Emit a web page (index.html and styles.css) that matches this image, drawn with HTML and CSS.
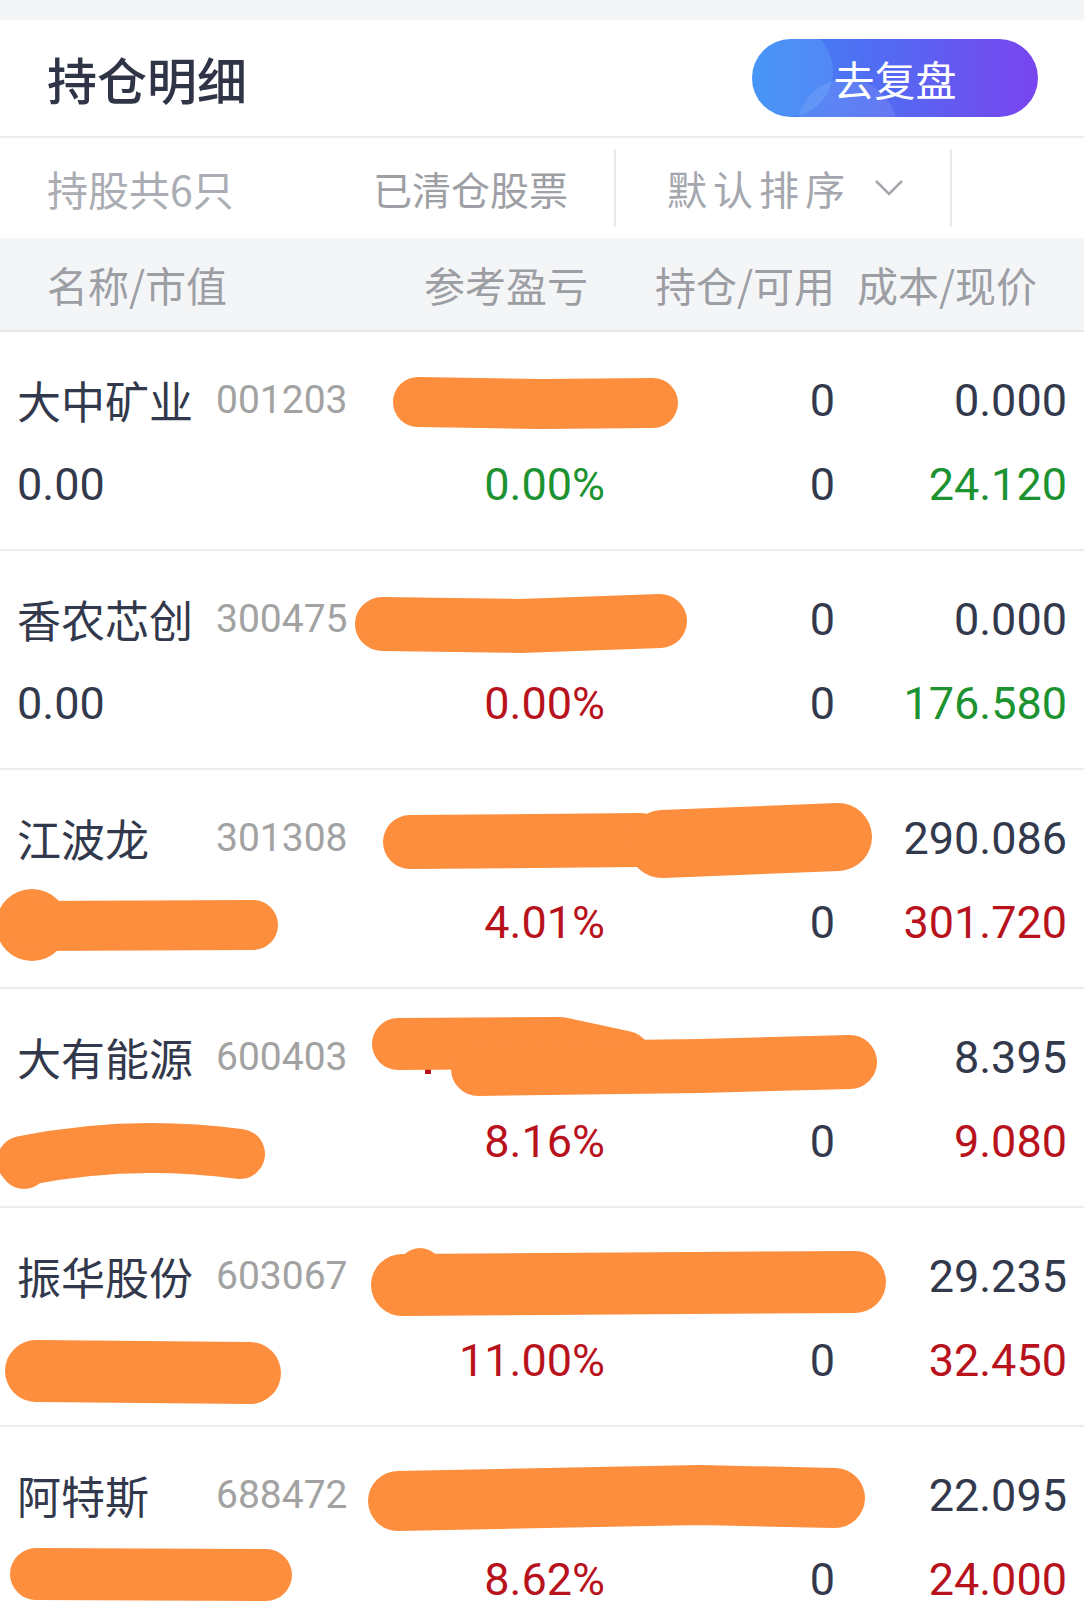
FILE: index.html
```html
<!DOCTYPE html>
<html lang="zh-CN">
<head>
    <meta charset="UTF-8">
    <meta name="viewport" content="width=device-width, initial-scale=1.0">
    <title>持仓明细</title>
    <link rel="stylesheet" href="styles.css">
</head>
<body>

<div class="topbar"></div>

<header class="panel-head">
    <h1 class="panel-title">持仓明细</h1>
    <button class="review-btn"><span>去复盘</span></button>
</header>

<nav class="tabs">
    <div class="tab tab-count">持股共6只</div>
    <div class="tab tab-cleared">已清仓股票</div>
    <div class="tab tab-sort">
        <span>默认排序</span>
        <svg class="chevron" width="30" height="18" viewBox="0 0 30 18">
            <polyline points="2,2 15,15 28,2"></polyline>
        </svg>
    </div>
</nav>

<div class="col-head">
    <span>名称/市值</span>
    <span class="r">参考盈亏</span>
    <span class="r">持仓/可用</span>
    <span class="r">成本/现价</span>
</div>

<ul class="positions">
    <li class="position">
        <div class="line">
            <div class="stock"><span class="stock-name">大中矿业</span><span class="stock-code">001203</span></div>
            <span class="num"></span>
            <span class="num">0</span>
            <span class="num">0.000</span>
        </div>
        <div class="line">
            <div class="stock"><span class="mv">0.00</span></div>
            <span class="num down">0.00%</span>
            <span class="num">0</span>
            <span class="num down">24.120</span>
        </div>
        <svg class="scribble" viewBox="0 0 1084 219">
            <path d="M418 70 L540 72 L653 71" stroke-width="50"></path>
        </svg>
    </li>
    <li class="position">
        <div class="line">
            <div class="stock"><span class="stock-name">香农芯创</span><span class="stock-code">300475</span></div>
            <span class="num"></span>
            <span class="num">0</span>
            <span class="num">0.000</span>
        </div>
        <div class="line">
            <div class="stock"><span class="mv">0.00</span></div>
            <span class="num up">0.00%</span>
            <span class="num">0</span>
            <span class="num down">176.580</span>
        </div>
        <svg class="scribble" viewBox="0 0 1084 219">
            <path d="M382 73 L520 75 L660 70" stroke-width="54"></path>
        </svg>
    </li>
    <li class="position">
        <div class="line">
            <div class="stock"><span class="stock-name">江波龙</span><span class="stock-code">301308</span></div>
            <span class="num"></span>
            <span class="num"></span>
            <span class="num">290.086</span>
        </div>
        <div class="line">
            <div class="stock"><span class="mv"></span></div>
            <span class="num up">4.01%</span>
            <span class="num">0</span>
            <span class="num up">301.720</span>
        </div>
        <svg class="scribble" viewBox="0 0 1084 219">
            <path d="M410 72 L640 70" stroke-width="54"></path>
            <path d="M662 74 L838 67" stroke-width="68"></path>
            <circle cx="32" cy="155" r="36"></circle>
            <path d="M30 156 L253 155" stroke-width="50"></path>
        </svg>
    </li>
    <li class="position">
        <div class="line">
            <div class="stock"><span class="stock-name">大有能源</span><span class="stock-code">600403</span></div>
            <span class="num"></span>
            <span class="num"></span>
            <span class="num">8.395</span>
        </div>
        <div class="line">
            <div class="stock"><span class="mv"></span></div>
            <span class="num up">8.16%</span>
            <span class="num">0</span>
            <span class="num up">9.080</span>
        </div>
        <svg class="scribble" viewBox="0 0 1084 219">
            <rect class="tick" x="425" y="72" width="6" height="13"></rect>
            <path d="M398 55 L560 54 L625 68" stroke-width="52"></path>
            <path d="M478 80 L700 77 L850 73" stroke-width="54"></path>
            <circle cx="24" cy="176" r="24"></circle>
            <path d="M22 172 Q130 150 240 165" stroke-width="50"></path>
        </svg>
    </li>
    <li class="position">
        <div class="line">
            <div class="stock"><span class="stock-name">振华股份</span><span class="stock-code">603067</span></div>
            <span class="num"></span>
            <span class="num"></span>
            <span class="num">29.235</span>
        </div>
        <div class="line">
            <div class="stock"><span class="mv"></span></div>
            <span class="num up">11.00%</span>
            <span class="num">0</span>
            <span class="num up">32.450</span>
        </div>
        <svg class="scribble" viewBox="0 0 1084 219">
            <circle cx="420" cy="62" r="22"></circle>
            <path d="M402 77 L855 74" stroke-width="62"></path>
            <path d="M36 163 L250 165" stroke-width="62"></path>
        </svg>
    </li>
    <li class="position">
        <div class="line">
            <div class="stock"><span class="stock-name">阿特斯</span><span class="stock-code">688472</span></div>
            <span class="num"></span>
            <span class="num"></span>
            <span class="num">22.095</span>
        </div>
        <div class="line">
            <div class="stock"><span class="mv"></span></div>
            <span class="num up">8.62%</span>
            <span class="num">0</span>
            <span class="num up">24.000</span>
        </div>
        <svg class="scribble" viewBox="0 0 1084 219">
            <path d="M398 74 L700 68 L835 71" stroke-width="60"></path>
            <path d="M36 147 L266 148" stroke-width="52"></path>
        </svg>
    </li>
</ul>

</body>
</html>
```

FILE: styles.css
```css
body {
    font-family: "Noto Sans CJK SC", sans-serif;
    margin: 0;
    padding: 0;
    background-color: #ffffff;
    color: #33394c;
    overflow: hidden;
}

.topbar {
    height: 20px;
    background-color: #f4f5f7;
}

.panel-head {
    height: 118px;
    box-sizing: border-box;
    padding: 0 46px 0 47px;
    display: flex;
    align-items: center;
    justify-content: space-between;
    border-bottom: 2px solid #ebecef;
}

.panel-title {
    margin: 0;
    font-size: 50px;
    font-weight: 500;
    color: #2f3447;
    line-height: 1;
}

.review-btn {
    position: relative;
    overflow: hidden;
    width: 286px;
    height: 78px;
    border: none;
    border-radius: 39px;
    background: linear-gradient(90deg, #3a88f5 0%, #5568f2 50%, #7a44ef 100%);
    color: #ffffff;
    font-family: "Noto Sans CJK SC", sans-serif;
    font-size: 41px;
    padding: 0;
    cursor: pointer;
}

.review-btn::before,
.review-btn::after {
    content: "";
    position: absolute;
    border-radius: 50%;
    background: rgba(120, 200, 255, 0.22);
}

.review-btn::before {
    width: 92px;
    height: 92px;
    left: -11px;
    top: -14px;
}

.review-btn::after {
    width: 100px;
    height: 100px;
    left: 45px;
    top: 40px;
    background: rgba(255, 255, 255, 0.1);
}

.review-btn span {
    position: relative;
    z-index: 1;
}

.tabs {
    height: 100px;
    display: flex;
    align-items: center;
    padding-left: 47px;
}

.tab {
    font-size: 40px;
    color: #a2a4ab;
    box-sizing: border-box;
}

.tab-count {
    width: 326px;
    font-size: 41px;
    color: #abadb4;
}

.tab-cleared {
    width: 241px;
    font-size: 39px;
    color: #9d9fa5;
}

.tab-sort {
    width: 338px;
    height: 78px;
    display: flex;
    align-items: center;
    gap: 23px;
    padding-left: 51px;
    border-left: 2px solid #e8e9ec;
    border-right: 2px solid #e8e9ec;
    letter-spacing: 6px;
    color: #a5a7ae;
}

.chevron polyline {
    fill: none;
    stroke: #a5a7ae;
    stroke-width: 2.5;
}

.col-head {
    height: 94px;
    box-sizing: border-box;
    padding: 0 47px;
    display: grid;
    grid-template-columns: 353px 188px 247px 202px;
    align-items: center;
    background-color: #f4f5f7;
    border-bottom: 2px solid #e7e8eb;
    font-size: 41px;
    color: #9c9ea4;
}

.r {
    text-align: right;
}

.positions {
    list-style: none;
    margin: 0;
    padding: 0;
}

.position {
    position: relative;
    padding: 26px 17px 23px;
    border-bottom: 2px solid #ebecef;
}

.line {
    height: 84px;
    display: grid;
    grid-template-columns: 363px 225px 230px 232px;
    align-items: center;
}

.stock {
    display: flex;
    align-items: center;
}

.stock-name {
    width: 199px;
    font-size: 44px;
    color: #33394c;
}

.stock-code {
    font-family: Roboto, "Noto Sans CJK SC", sans-serif;
    font-size: 39px;
    color: #a2a2a2;
}

.mv,
.num {
    font-family: Roboto, "Noto Sans CJK SC", sans-serif;
    font-size: 45px;
    color: #33394c;
}

.num {
    text-align: right;
}

.num.up {
    color: #b8131d;
}

.num.down {
    color: #1c9231;
}

.scribble {
    position: absolute;
    top: 0;
    left: 0;
    width: 1084px;
    height: 219px;
    pointer-events: none;
}

.scribble path {
    fill: none;
    stroke: #fd8e3e;
    stroke-linecap: round;
    stroke-linejoin: round;
}

.scribble circle {
    fill: #fd8e3e;
}

.scribble .tick {
    fill: #b8131d;
}
```
